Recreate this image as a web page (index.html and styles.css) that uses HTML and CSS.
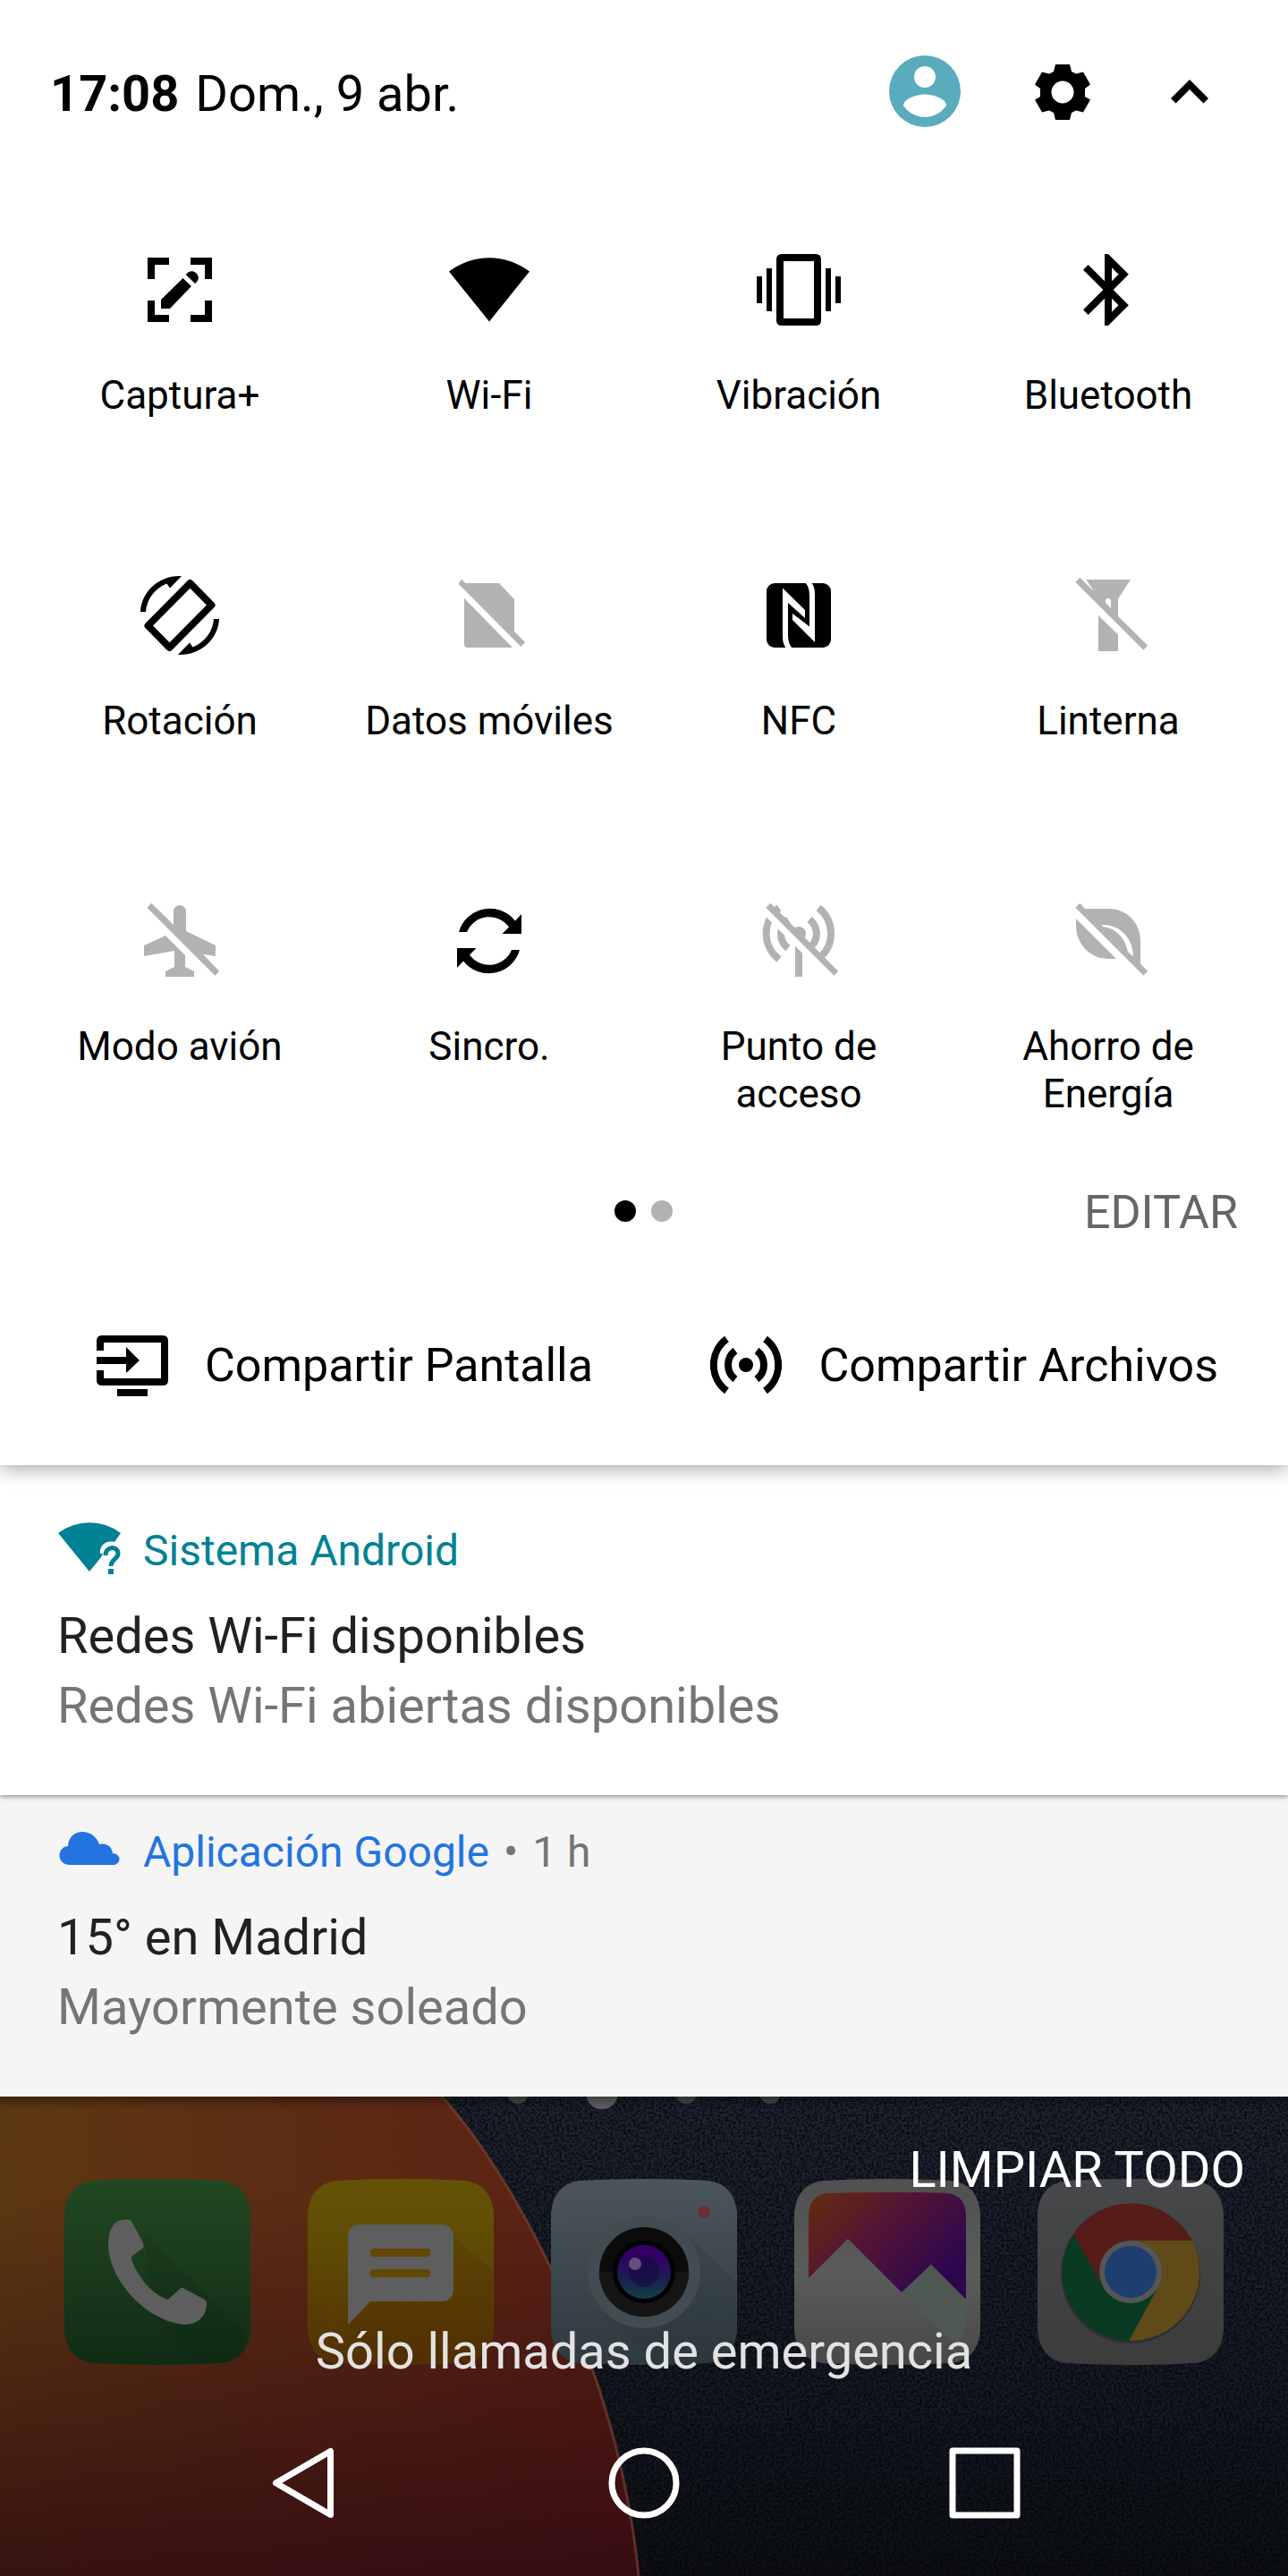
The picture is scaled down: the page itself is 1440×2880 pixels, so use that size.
FILE: index.html
```html
<!DOCTYPE html>
<html lang="es">
<head>
  <meta charset="UTF-8">
  <meta name="viewport" content="width=device-width, initial-scale=1.0">
  <title>Panel de notificaciones</title>
  <link rel="stylesheet" href="styles.css">
</head>
<body>

  <section class="panel">
    <header class="status">
      <div class="clock"><b>17:08</b> <span>Dom., 9 abr.</span></div>
      <button type="button" class="icon-btn avatar" aria-label="Usuario">
        <svg viewBox="0 0 24 24"><circle cx="12" cy="12" r="10" fill="#5aacbd"/><circle cx="12" cy="8" r="3" fill="#fff"/><path fill="#fff" d="M12 19.2c-2.5 0-4.71-1.28-6-3.22.03-1.99 4-3.08 6-3.08 1.99 0 5.97 1.09 6 3.08-1.29 1.94-3.5 3.22-6 3.22z"/></svg>
      </button>
      <button type="button" class="icon-btn" aria-label="Ajustes">
        <svg viewBox="-48 -49 96 96"><path fill-rule="evenodd" d="M-8-31H8L10-23 15-20.500 23-22.500 31-8.500 25-4V5L31 8.500 23 22.500 15 20.500 10 23 8 31H-8L-10 23-15 20.500-23 22.500-31 8.500-25 5V-4L-31-8.500-23-22.500-15-20.500-10-23ZM0-12.500A12.500 12.500 0 1 0 0 12.500 12.500 12.500 0 1 0 0-12.500Z"/></svg>
      </button>
      <button type="button" class="icon-btn" aria-label="Contraer">
        <svg viewBox="0 0 96 96"><path d="M48 35 69 56 63.500 61.500 48 46 32.500 61.500 27 56Z"/></svg>
      </button>
    </header>

    <div class="tiles">
      <button type="button" class="tile">
        <svg viewBox="0 0 96 96"><path d="M12 12H36V20H20V36H12ZM60 12H84V36H76V20H60ZM12 60H20V76H36V84H12ZM76 60H84V84H60V76H76ZM27 59 51.500 35 61 44 37 69H27ZM54.700 31C58 27 62 26 66 29 70 33 70 37 65 41Z"/></svg>
        <span>Captura+</span>
      </button>
      <button type="button" class="tile">
        <svg viewBox="0 0 96 96"><path d="M48 83.500 3 27.500A74 74 0 0 1 93 27.500Z"/></svg>
        <span>Wi-Fi</span>
      </button>
      <button type="button" class="tile">
        <svg viewBox="0 0 96 96"><path fill-rule="evenodd" d="M29 8H67Q73 8 73 14V82Q73 88 67 88H29Q23 88 23 82V14Q23 8 29 8ZM31 16V80H65V16ZM1 33H7V63H1ZM12 24H18V72H12ZM78 24H84V72H78ZM89 33H95V63H89Z"/></svg>
        <span>Vibración</span>
      </button>
      <button type="button" class="tile">
        <svg viewBox="0 0 24 24"><path d="M17.710 7.710L12 2h-1v7.590L6.410 5 5 6.410 10.590 12 5 17.590 6.410 19 11 14.410V22h1l5.710-5.710-4.300-4.290 4.300-4.290zM13 5.830l1.880 1.880L13 9.590V5.830zm1.880 10.460L13 18.170v-3.760l1.880 1.880z"/></svg>
        <span>Bluetooth</span>
      </button>
      <button type="button" class="tile">
        <svg viewBox="0 0 96 96"><path fill="none" stroke="#000" stroke-width="8" stroke-linejoin="round" d="M59.500 12 83.500 36.500 36.500 84 12.500 59.500Z"/><path d="M4 44C5 22 24 3 50 4L37 17.500 33.500 12.500C20 18 11 30 10 44ZM92 52C91 74 72 93 46 92L59 78.500 62.500 83.500C76 78 85 66 86 52Z"/></svg>
        <span>Rotación</span>
      </button>
      <button type="button" class="tile off">
        <svg viewBox="0 0 96 96"><path d="M17 7.500 21.500 12H59L76 30V66L88 78 83.500 83 13.500 12.700ZM20 29 74 84H24Q20 84 20 80Z"/></svg>
        <span>Datos móviles</span>
      </button>
      <button type="button" class="tile">
        <svg viewBox="0 0 96 96"><rect x="12" y="12" width="72" height="72" rx="9"/><path fill="#fff" d="M55 11Q60 16 60 26V60.500L41 46V53L66 78V24Q66 16 62 11ZM41 85Q36 80 36 70V34L55 51V42L30 17.500V72Q30 80 34 85Z"/></svg>
        <span>NFC</span>
      </button>
      <button type="button" class="tile off">
        <svg viewBox="0 0 96 96"><path d="M16.400 5.700 32 21.300 23.500 8H73L59 29.500V49L92 81.700 87.500 86.700 11.300 10.700ZM37 48 59 69.500V88H37Z"/><path fill="#fff" d="M45 34V32Q45 29 48 29T51 32V40Z"/></svg>
        <span>Linterna</span>
      </button>
      <button type="button" class="tile off">
        <svg viewBox="0 0 96 96"><path d="M16.400 5.700 41 30V15A7 7 0 0 1 55 15V37L88 53V65L74 62.700 92 81.700 87.500 86.700 11.300 10.700ZM8 53 32 42 54 64V77L64 82V88H32V82L42 77V59L8 65Z"/></svg>
        <span>Modo avión</span>
      </button>
      <button type="button" class="tile">
        <svg viewBox="0 0 96 96"><path d="M14 38A36 36 0 0 1 77 25.500L84 18V40H62.500L70 32.500A27 27 0 0 0 23 38ZM82 58A36 36 0 0 1 19 70.500L12 78V56H33.500L26 63.500A27 27 0 0 0 73 58Z"/></svg>
        <span>Sincro.</span>
      </button>
      <button type="button" class="tile off">
        <svg viewBox="0 0 96 96"><circle cx="48" cy="40" r="8"/><path fill="none" stroke="#b2b2b2" stroke-width="8" d="M70 11A36 36 0 0 1 74 64.500M26 11A36 36 0 0 0 26 68.500M60 24A20 20 0 0 1 63 53M36 24A20 20 0 0 0 36 56M48 44V88"/><path stroke="#fff" stroke-width="8" d="M4 8 88 92"/><path d="M16.400 5.700 92 81.700 87.500 86.700 11.300 10.700Z"/></svg>
        <span>Punto de acceso</span>
      </button>
      <button type="button" class="tile off">
        <svg viewBox="0 0 96 96"><path d="M16.400 5.700 22 12H49C69 12 84 28 84 48V73.500L92 81.700 87.500 86.700 11.300 10.700ZM12 23 57 68H49C28 68 12 52 12 30Z"/><path fill="#fff" d="M41 30C60 29 76 44 76 65.500L70 60C67 45 57 34 42 32Z"/></svg>
        <span>Ahorro de Energía</span>
      </button>
    </div>

    <div class="pager">
      <div class="dots"><i class="dot current"></i><i class="dot"></i></div>
      <button type="button" class="edit">EDITAR</button>
    </div>

    <div class="share">
      <button type="button">
        <svg viewBox="0 0 80 80"><path fill-rule="evenodd" d="M6 7H74Q80 7 80 13V57Q80 63 74 63H6Q0 63 0 57V46H8V55H72V15H8V24H0V13Q0 7 6 7ZM0 31H33V20L48 35 33 49V39H0ZM23 67H57V75H23Z"/></svg>
        Compartir Pantalla
      </button>
      <button type="button">
        <svg viewBox="0 0 80 80"><circle cx="40" cy="40" r="8"/><path fill="none" stroke="#000" stroke-width="8" d="M18.500 11A36 36 0 0 0 18.500 69M61.500 11A36 36 0 0 1 61.500 69M28 24A20 20 0 0 0 28 56M52 24A20 20 0 0 1 52 56"/></svg>
        Compartir Archivos
      </button>
    </div>
  </section>

  <main class="notifications">
    <article class="notice system">
      <div class="source">
        <svg viewBox="0 0 72 60"><path d="M36 57 1 14A58 58 0 0 1 71 14L64 24C54 22 47 28 48 37H51L49 41Z"/><path fill="none" stroke="#008295" stroke-width="5" d="M54 39C54 28 68 28 68 37 68 43 60 43 60 51"/><path d="M57 54H63V60H57Z"/></svg>
        <span>Sistema Android</span>
      </div>
      <h2>Redes Wi-Fi disponibles</h2>
      <p>Redes Wi-Fi abiertas disponibles</p>
    </article>
    <article class="notice weather">
      <div class="source">
        <svg viewBox="0 0 72 60"><path d="M14 48C-1 48-1 28 12 27 13 6 41 6 47 25 57 23 61 29 62 35 73 36 71 48 62 48Z"/></svg>
        <span>Aplicación Google</span>
        <small>•</small>
        <small>1 h</small>
      </div>
      <h2>15° en Madrid</h2>
      <p>Mayormente soleado</p>
    </article>
  </main>

  <section class="home">
    <svg class="wallpaper" viewBox="0 0 1440 536" preserveAspectRatio="none">
      <defs>
        <linearGradient id="sand" x1="0" y1="0" x2="1" y2="0"><stop offset="0" stop-color="#5c3812"/><stop offset=".45" stop-color="#5c2c14"/><stop offset="1" stop-color="#5c2014"/></linearGradient>
        <linearGradient id="dusk" x1="0" y1="0" x2="0" y2="1"><stop offset=".2" stop-color="#2a0610" stop-opacity="0"/><stop offset="1" stop-color="#2a0610" stop-opacity=".75"/></linearGradient>
        <linearGradient id="night" x1="0" y1="0" x2="0" y2="1"><stop offset="0" stop-color="#20242f"/><stop offset=".6" stop-color="#161a22"/><stop offset="1" stop-color="#0e1013"/></linearGradient>
        <linearGradient id="edge" x1="0" y1="0" x2="0" y2="1"><stop offset="0" stop-color="#000" stop-opacity=".35"/><stop offset="1" stop-color="#000" stop-opacity="0"/></linearGradient>
        <filter id="grain" x="0" y="0" width="100%" height="100%" color-interpolation-filters="sRGB"><feTurbulence type="fractalNoise" baseFrequency=".35" numOctaves="2" seed="4"/><feColorMatrix values="0 0 0 0 .01  0 0 0 0 .02  0 0 0 0 .05  4 0 0 0 -1.600"/></filter>
      </defs>
      <rect width="1440" height="536" fill="url(#night)"/>
      <rect width="1440" height="536" filter="url(#grain)" opacity=".7"/>
      <path fill="url(#sand)" d="M0 0H494C566 78 690 290 714 536H0Z"/>
      <path fill="url(#dusk)" d="M0 0H494C566 78 690 290 714 536H0Z"/>
      <path fill="none" stroke="#8a4a38" stroke-opacity=".55" stroke-width="3" d="M494 0C566 78 690 290 714 536"/>
      <g fill="#48494b"><circle cx="579" cy="-4" r="12"/><circle cx="673" cy="-4" r="18" fill="#626262"/><circle cx="767" cy="-4" r="12"/><circle cx="861" cy="-4" r="12"/></g>
      <rect width="1440" height="14" fill="url(#edge)"/>
    </svg>

    <div class="dock">
      <svg viewBox="0 0 208 208">
        <defs><linearGradient id="phone" x1="0" y1="0" x2="0" y2="1"><stop offset="0" stop-color="#224823"/><stop offset="1" stop-color="#112b15"/></linearGradient></defs>
        <path fill="url(#phone)" d="M32 2Q104-2 176 2Q205 6 208 38V170Q205 202 176 206Q104 210 32 206Q3 202 0 170V38Q3 6 32 2Z"/>
        <path fill="#000" opacity=".06" d="M88 62 204 172Q202 204 172 206H148L100 154Z"/>
        <path fill="#5e5e5e" d="M58 48Q73 42 76 49L88 72Q90 76 87 78L76 86Q74 89 76 93C84 112 98 128 113 134Q116 136 118 133L129 123Q132 120 136 124L157 135Q160 137 159 142C157 156 148 163 133 163C90 158 49 112 49 73Q49 56 58 48Z"/>
      </svg>
      <svg viewBox="0 0 208 208">
        <defs><linearGradient id="chat" x1="0" y1="0" x2="0" y2="1"><stop offset="0" stop-color="#635306"/><stop offset=".35" stop-color="#5f4c04"/><stop offset="1" stop-color="#533004"/></linearGradient></defs>
        <path fill="url(#chat)" d="M32 2Q104-2 176 2Q205 6 208 38V170Q205 202 176 206Q104 210 32 206Q3 202 0 170V38Q3 6 32 2Z"/>
        <path fill="#4b2a00" opacity=".2" d="M160 60 207 104V170Q205 202 176 206H90L45 163Z"/>
        <path fill="#5e5e5e" d="M59 51H149Q163 51 163 65V123Q163 137 149 137H70L45 163V65Q45 51 59 51Z"/>
        <path stroke="#624705" stroke-width="9" stroke-linecap="round" d="M74 82.500H133M74 105.500H133"/>
      </svg>
      <svg viewBox="0 0 208 208">
        <defs>
          <linearGradient id="camera" x1="0" y1="0" x2="0" y2="1"><stop offset="0" stop-color="#4c555c"/><stop offset="1" stop-color="#2d3a3f"/></linearGradient>
          <linearGradient id="lens" x1="0" y1="0" x2="0" y2="1"><stop offset=".2" stop-color="#340068"/><stop offset=".55" stop-color="#1d1952"/><stop offset="1" stop-color="#124045"/></linearGradient>
        </defs>
        <path fill="url(#camera)" d="M32 2Q104-2 176 2Q205 6 208 38V170Q205 202 176 206Q104 210 32 206Q3 202 0 170V38Q3 6 32 2Z"/>
        <path fill="#1d282d" opacity=".15" d="M150 60 207 116V170Q205 202 176 206H116L58 148Z"/>
        <circle cx="104" cy="104" r="63" fill="#424c51"/>
        <circle cx="104" cy="104" r="50" fill="#0b0b0b"/>
        <path fill="#151515" d="M54 104A50 50 0 0 0 154 104Z"/>
        <circle cx="104" cy="104" r="35" fill="#020204"/>
        <circle cx="104" cy="104" r="30" fill="url(#lens)"/>
        <circle cx="104" cy="104" r="17" fill="#14093d" opacity=".6"/>
        <circle cx="94" cy="95" r="7" fill="#62507e"/>
        <circle cx="171" cy="37" r="7" fill="#6b2f30"/>
      </svg>
      <svg viewBox="0 0 208 208">
        <defs>
          <linearGradient id="frame" x1="0" y1="0" x2="0" y2="1"><stop offset="0" stop-color="#505050"/><stop offset=".5" stop-color="#5b5b5b"/><stop offset="1" stop-color="#484848"/></linearGradient>
          <linearGradient id="sky" x1="0" y1=".1" x2="1" y2=".8"><stop offset="0" stop-color="#632a10"/><stop offset=".4" stop-color="#541533"/><stop offset=".9" stop-color="#2c0750"/></linearGradient>
        </defs>
        <path fill="url(#frame)" d="M32 2Q104-2 176 2Q205 6 208 38V170Q205 202 176 206Q104 210 32 206Q3 202 0 170V38Q3 6 32 2Z"/>
        <path fill="url(#sky)" d="M16 111V40Q17 19 36 16Q104 14 172 16Q191 19 192 40V135L153 96 120 127 60 67Z"/>
        <path fill="#4f5853" d="M153 96 192 135V160Q191 175 180 186L120 127Z"/>
      </svg>
      <svg viewBox="0 0 208 208">
        <defs><linearGradient id="card" x1="0" y1="0" x2="0" y2="1"><stop offset="0" stop-color="#46484a"/><stop offset="1" stop-color="#3c3c3d"/></linearGradient></defs>
        <path fill="url(#card)" d="M32 2Q104-2 176 2Q205 6 208 38V170Q205 202 176 206Q104 210 32 206Q3 202 0 170V38Q3 6 32 2Z"/>
        <circle cx="104" cy="106" r="78" fill="#242526" opacity=".6"/>
        <path fill="#551c18" d="M40 62A77 77 0 0 1 172.600 69H104V104L73.700 121.500Z"/>
        <path fill="#5f4a18" d="M172.600 69A77 77 0 0 1 102 181L134.300 121.500 104 104V69Z"/>
        <path fill="#083b22" d="M102 181A77 77 0 0 1 40 62L73.700 121.500 104 104 134.300 121.500Z"/>
        <circle cx="104" cy="104" r="35" fill="#555657"/>
        <circle cx="104" cy="104" r="29" fill="#1f3e70"/>
      </svg>
    </div>

    <button type="button" class="clear">LIMPIAR TODO</button>
    <p class="carrier">Sólo llamadas de emergencia</p>

    <nav class="nav">
      <button type="button" aria-label="Atrás"><svg viewBox="0 0 80 80"><path d="M9.500 40 70.500 4.500V75.500Z"/></svg></button>
      <button type="button" aria-label="Inicio"><svg viewBox="0 0 80 80"><circle cx="40" cy="40" r="36"/></svg></button>
      <button type="button" aria-label="Recientes"><svg viewBox="0 0 80 80"><rect x="4" y="4" width="72" height="72"/></svg></button>
    </nav>
  </section>

</body>
</html>
```
FILE: styles.css
```css
body {
  margin: 0;
  min-height: 100vh;
  display: flex;
  flex-direction: column;
  font-family: Roboto, sans-serif;
  color: #000;
  background-color: #0b0d10;
}

button {
  margin: 0;
  padding: 0;
  border: none;
  background: none;
  color: inherit;
  font: inherit;
  cursor: pointer;
}

svg {
  display: block;
  flex: none;
}

/* Quick settings */
.panel {
  position: relative;
  z-index: 2;
  background-color: #fff;
  box-shadow: 0 4px 20px rgba(0, 0, 0, 0.35);
}

.status {
  display: flex;
  align-items: center;
  gap: 46px;
  padding: 54px 62px 0 56px;
}

.clock {
  flex: 1;
  padding-top: 6px;
  font-size: 56px;
  line-height: 66px;
}

.clock span {
  margin-left: 4px;
}

.icon-btn svg {
  width: 96px;
  height: 96px;
}

.avatar {
  margin-right: 12px;
}

.tiles {
  display: grid;
  grid-template-columns: repeat(4, 1fr);
  row-gap: 118px;
  grid-auto-rows: minmax(246px, auto);
  padding: 126px 28px 0;
}

.tile {
  display: flex;
  flex-direction: column;
  align-items: center;
  gap: 44px;
  font-size: 44px;
  line-height: 53px;
}

.tile svg {
  width: 96px;
  height: 96px;
}

.tile span {
  max-width: 280px;
}

.off svg {
  fill: #b2b2b2;
}

.pager {
  display: grid;
  grid-template-columns: 1fr auto 1fr;
  align-items: center;
  padding: 74px 56px 0 54px;
}

.dots {
  grid-column: 2;
  display: flex;
  gap: 17px;
  padding-bottom: 4px;
}

.dot {
  width: 24px;
  height: 24px;
  border-radius: 50%;
  background-color: #b2b2b2;
}

.dot.current {
  background-color: #000;
}

.edit {
  justify-self: end;
  font-size: 52px;
  line-height: 64px;
  color: #666;
}

.share {
  display: flex;
  justify-content: space-between;
  padding: 98px 78px 70px 108px;
}

.share button {
  display: flex;
  align-items: flex-start;
  gap: 41px;
  font-size: 52px;
  line-height: 82px;
}

.share svg {
  width: 80px;
  height: 80px;
}

/* Notifications */
.notice {
  position: relative;
  padding: 30px 64px 61px;
}

.system {
  z-index: 1;
  padding-top: 62px;
  background-color: #fff;
  box-shadow: 0 2px 5px rgba(0, 0, 0, 0.4);
}

.weather {
  background-color: #f5f5f5;
}

.source {
  display: flex;
  align-items: flex-start;
  gap: 16px;
  font-size: 48px;
  line-height: 67px;
}

.source svg {
  width: 72px;
  height: 60px;
  margin-right: 8px;
}

.source small {
  font-size: 48px;
  color: #757575;
}

.system .source {
  color: #008295;
}

.system svg {
  fill: #008295;
}

.weather .source {
  color: #2374e1;
}

.weather svg {
  fill: #2374e1;
}

.notice h2,
.notice p {
  margin: 0;
  font-size: 56px;
  font-weight: normal;
  line-height: 78px;
}

.notice h2 {
  margin-top: 23px;
  color: #212121;
}

.notice p {
  color: #757575;
}

/* Home screen behind the shade */
.home {
  position: relative;
  flex: 1;
  overflow: hidden;
  color: #fff;
}

.wallpaper {
  position: absolute;
  inset: 0;
  width: 100%;
  height: 100%;
}

.dock {
  position: relative;
  display: flex;
  justify-content: space-between;
  padding: 92px 72px 0;
}

.dock svg {
  width: 208px;
  height: 208px;
}

.clear {
  position: absolute;
  top: 49px;
  right: 48px;
  font-size: 56px;
  line-height: 66px;
}

.carrier {
  position: absolute;
  top: 252px;
  left: 0;
  right: 0;
  margin: 0;
  text-align: center;
  font-size: 56px;
  line-height: 66px;
  color: #e2e2e2;
}

.nav {
  position: relative;
  display: flex;
  justify-content: center;
  gap: 301px;
  padding: 92px 0 64px;
}

.nav svg {
  width: 80px;
  height: 80px;
  fill: none;
  stroke: #fff;
  stroke-width: 7;
  stroke-linejoin: round;
}
```
